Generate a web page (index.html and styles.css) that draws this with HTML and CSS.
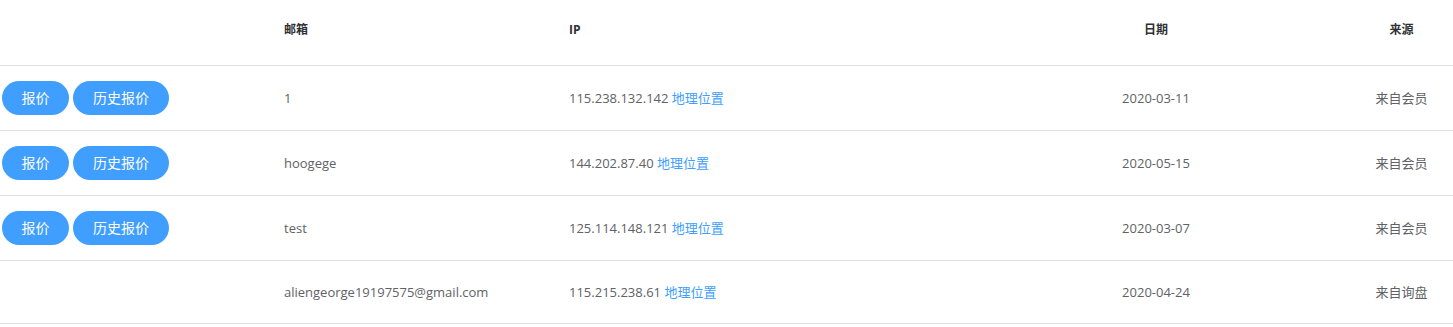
FILE: index.html
```html
<!DOCTYPE html>
<html lang="zh">
<head>
<meta charset="utf-8">
<link rel="stylesheet" href="styles.css">
</head>
<body>
<div class="table">
  <div class="row head">
    <div class="cell act"></div>
    <div class="cell">邮箱</div>
    <div class="cell">IP</div>
    <div class="cell center">日期</div>
    <div class="cell center">来源</div>
  </div>
  <div class="row">
    <div class="cell act"><button class="btn">报价</button><button class="btn">历史报价</button></div>
    <div class="cell">1</div>
    <div class="cell">115.238.132.142&nbsp;<a class="link">地理位置</a></div>
    <div class="cell center">2020-03-11</div>
    <div class="cell center">来自会员</div>
  </div>
  <div class="row">
    <div class="cell act"><button class="btn">报价</button><button class="btn">历史报价</button></div>
    <div class="cell">hoogege</div>
    <div class="cell">144.202.87.40&nbsp;<a class="link">地理位置</a></div>
    <div class="cell center">2020-05-15</div>
    <div class="cell center">来自会员</div>
  </div>
  <div class="row">
    <div class="cell act"><button class="btn">报价</button><button class="btn">历史报价</button></div>
    <div class="cell">test</div>
    <div class="cell">125.114.148.121&nbsp;<a class="link">地理位置</a></div>
    <div class="cell center">2020-03-07</div>
    <div class="cell center">来自会员</div>
  </div>
  <div class="row">
    <div class="cell act"></div>
    <div class="cell">aliengeorge19197575@gmail.com</div>
    <div class="cell">115.215.238.61&nbsp;<a class="link">地理位置</a></div>
    <div class="cell center">2020-04-24</div>
    <div class="cell center">来自询盘</div>
  </div>
</div>
</body>
</html>
```

FILE: styles.css
```css
html, body {
  margin: 0;
  padding: 0;
  background: #fff;
}
body {
  font-family: "Open Sans", "Noto Sans CJK SC", sans-serif;
  font-size: 13px;
  color: #606266;
}
.table {
  width: 1453px;
}
.row {
  display: grid;
  grid-template-columns: 274px 285px 403px 388px 103px;
  min-height: 62px;
  border-bottom: 1px solid #dfe1e5;
  align-items: center;
}
.row.head {
  height: 65px;
  font-size: 12px;
  font-weight: bold;
  color: #303133;
}
.row.head .cell {
  padding-top: 0;
  padding-bottom: 6px;
}
.cell {
  padding: 15px 10px;
  white-space: nowrap;
  line-height: 20px;
}
.cell.center {
  text-align: center;
  padding-left: 0;
  padding-right: 0;
}
.cell.act {
  padding: 15px 0 15px 2px;
  display: flex;
  gap: 4px;
}
.row.head .cell.act { padding: 0; }
.btn {
  height: 34px;
  padding: 0 19.5px;
  border: none;
  border-radius: 17px;
  background: #409eff;
  color: #fff;
  font-family: "Open Sans", "Noto Sans CJK SC", sans-serif;
  font-size: 14px;
  line-height: 34px;
}
.btn + .btn {
  padding: 0 20px;
}
.link {
  color: #409eff;
}
```
